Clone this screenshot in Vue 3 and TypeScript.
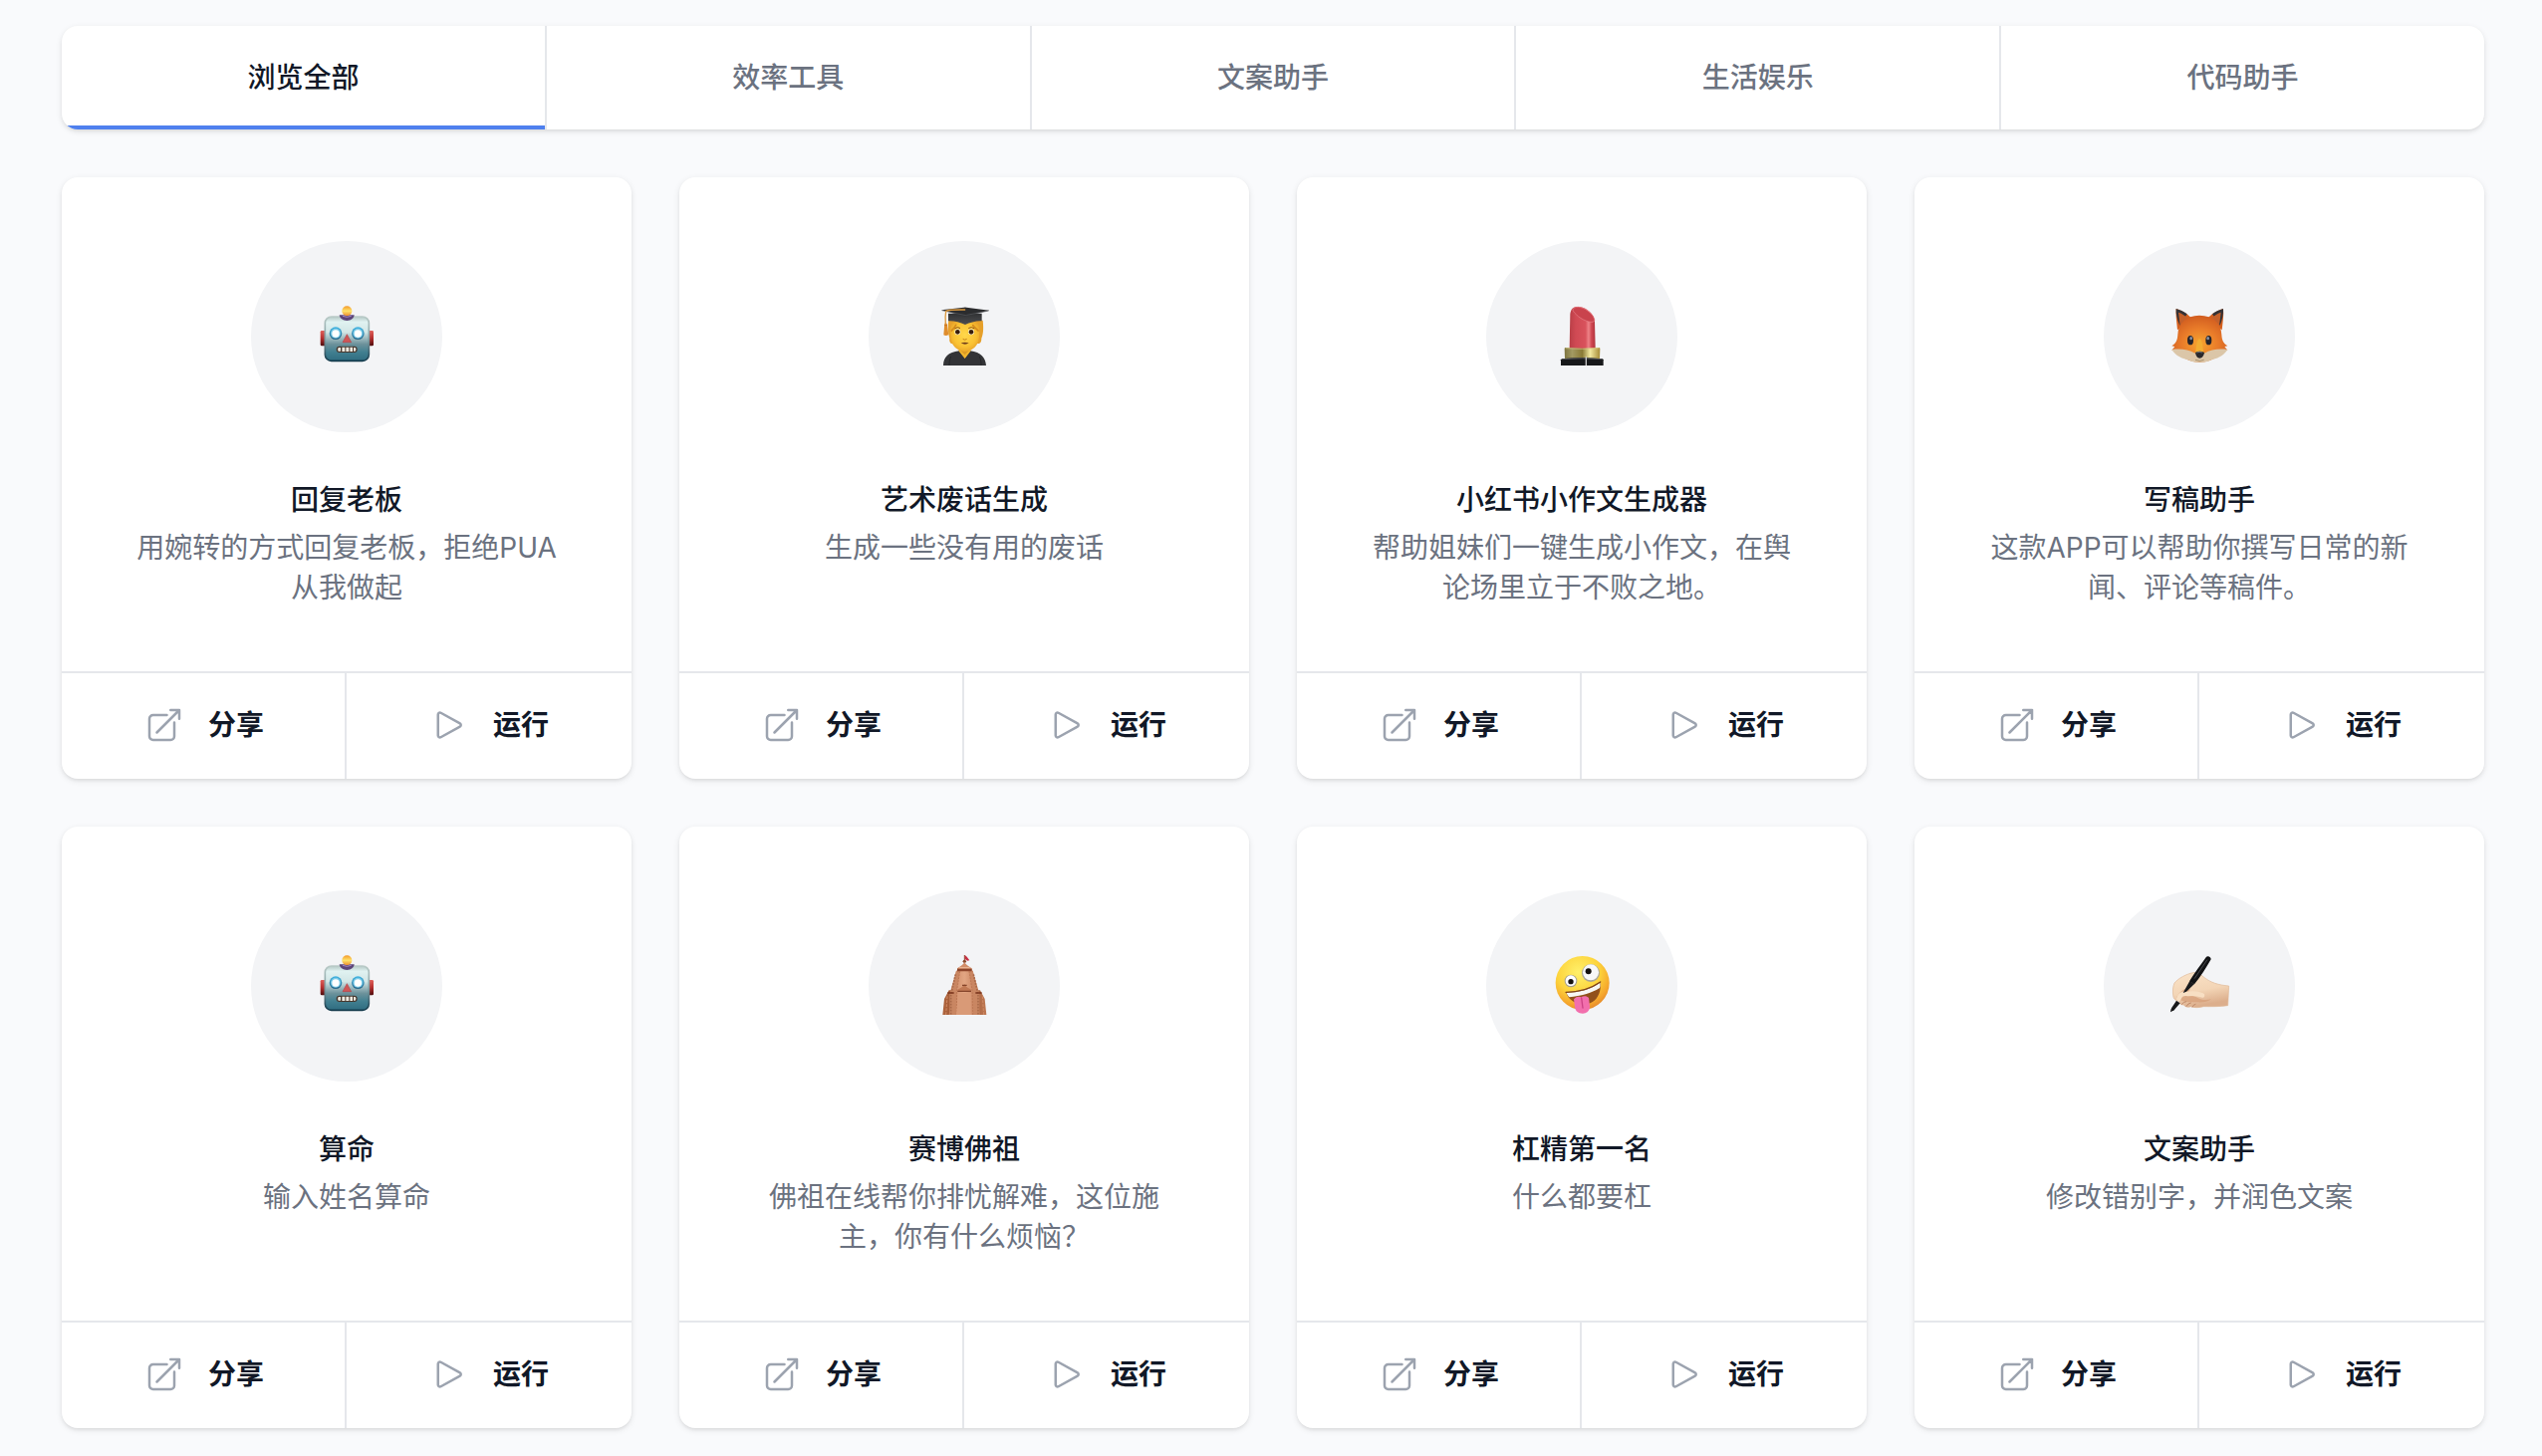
<script setup lang="ts">
import { ref } from 'vue'

type IconName = 'robot' | 'graduate' | 'lipstick' | 'fox' | 'temple' | 'zany' | 'writing'

interface Category {
  id: string
  label: string
}

interface AppCard {
  id: number
  icon: IconName
  name: string
  description: string
}

const categories: Category[] = [
  { id: 'all', label: '浏览全部' },
  { id: 'tools', label: '效率工具' },
  { id: 'writing', label: '文案助手' },
  { id: 'life', label: '生活娱乐' },
  { id: 'code', label: '代码助手' },
]

const apps: AppCard[] = [
  { id: 1, icon: 'robot', name: '回复老板', description: '用婉转的方式回复老板，拒绝PUA从我做起' },
  { id: 2, icon: 'graduate', name: '艺术废话生成', description: '生成一些没有用的废话' },
  { id: 3, icon: 'lipstick', name: '小红书小作文生成器', description: '帮助姐妹们一键生成小作文，在舆论场里立于不败之地。' },
  { id: 4, icon: 'fox', name: '写稿助手', description: '这款APP可以帮助你撰写日常的新闻、评论等稿件。' },
  { id: 5, icon: 'robot', name: '算命', description: '输入姓名算命' },
  { id: 6, icon: 'temple', name: '赛博佛祖', description: '佛祖在线帮你排忧解难，这位施主，你有什么烦恼？' },
  { id: 7, icon: 'zany', name: '杠精第一名', description: '什么都要杠' },
  { id: 8, icon: 'writing', name: '文案助手', description: '修改错别字，并润色文案' },
]

const active = ref('all')
</script>

<template>
  <main class="page">
    <!-- Gradients shared by the card pictures -->
    <svg class="defs" width="0" height="0" aria-hidden="true">
      <defs>
        <linearGradient id="g-steel" x1="0" y1="0" x2="0" y2="1">
          <stop offset="0" stop-color="#b4c8c5" />
          <stop offset="0.12" stop-color="#e0f2f1" />
          <stop offset="0.35" stop-color="#d2e6e6" />
          <stop offset="0.62" stop-color="#6d929b" />
          <stop offset="0.8" stop-color="#417f90" />
          <stop offset="1" stop-color="#2f6c80" />
        </linearGradient>
        <linearGradient id="g-steel-edge" x1="0" y1="0" x2="0" y2="1">
          <stop offset="0" stop-color="#b9cac7" />
          <stop offset="0.5" stop-color="#819ea2" />
          <stop offset="1" stop-color="#12394b" />
        </linearGradient>
        <linearGradient id="g-ear" x1="0" y1="0" x2="0" y2="1">
          <stop offset="0" stop-color="#e0605b" />
          <stop offset="0.5" stop-color="#b52f2e" />
          <stop offset="1" stop-color="#4c0b0c" />
        </linearGradient>
        <linearGradient id="g-bulb" x1="0" y1="0" x2="0" y2="1">
          <stop offset="0" stop-color="#f39a2c" />
          <stop offset="0.5" stop-color="#ffe36a" />
          <stop offset="1" stop-color="#ee8a2c" />
        </linearGradient>
        <linearGradient id="g-eye" x1="0" y1="0" x2="0" y2="1">
          <stop offset="0" stop-color="#3fb4e2" />
          <stop offset="1" stop-color="#2a6688" />
        </linearGradient>
        <radialGradient id="g-skin" cx="0.5" cy="0.45" r="0.6">
          <stop offset="0" stop-color="#ffd84b" />
          <stop offset="0.65" stop-color="#fac233" />
          <stop offset="1" stop-color="#e6a028" />
        </radialGradient>
        <linearGradient id="g-cap" x1="0" y1="0" x2="0" y2="1">
          <stop offset="0" stop-color="#303133" />
          <stop offset="1" stop-color="#4c4d50" />
        </linearGradient>
        <linearGradient id="g-lip" x1="0" y1="0" x2="1" y2="0">
          <stop offset="0" stop-color="#b93f47" />
          <stop offset="0.25" stop-color="#d04a54" />
          <stop offset="0.62" stop-color="#d9525c" />
          <stop offset="0.74" stop-color="#ee8489" />
          <stop offset="0.85" stop-color="#cf4650" />
          <stop offset="1" stop-color="#b0343d" />
        </linearGradient>
        <linearGradient id="g-gold" x1="0" y1="0" x2="1" y2="0">
          <stop offset="0" stop-color="#7d7440" />
          <stop offset="0.22" stop-color="#a39a62" />
          <stop offset="0.5" stop-color="#8a7a35" />
          <stop offset="0.72" stop-color="#f3e9a0" />
          <stop offset="1" stop-color="#a78c36" />
        </linearGradient>
        <radialGradient id="g-fox" cx="0.5" cy="0.6" r="0.62">
          <stop offset="0" stop-color="#f6a52f" />
          <stop offset="0.5" stop-color="#ea7d2a" />
          <stop offset="1" stop-color="#cf5a1f" />
        </radialGradient>
        <linearGradient id="g-temple" x1="0" y1="0" x2="1" y2="0">
          <stop offset="0" stop-color="#c98461" />
          <stop offset="0.5" stop-color="#e2a582" />
          <stop offset="1" stop-color="#bb7350" />
        </linearGradient>
        <linearGradient id="g-temple-side" x1="0" y1="0" x2="1" y2="0">
          <stop offset="0" stop-color="#b0663f" />
          <stop offset="0.5" stop-color="#8d492b" />
          <stop offset="1" stop-color="#c07a54" />
        </linearGradient>
        <radialGradient id="g-face" cx="0.42" cy="0.3" r="0.72">
          <stop offset="0" stop-color="#fff06a" />
          <stop offset="0.55" stop-color="#fdd43c" />
          <stop offset="0.85" stop-color="#f5a62c" />
          <stop offset="1" stop-color="#e58a2c" />
        </radialGradient>
        <linearGradient id="g-hand" x1="0" y1="0" x2="0.3" y2="1">
          <stop offset="0" stop-color="#fae3c8" />
          <stop offset="0.6" stop-color="#f3d5b6" />
          <stop offset="1" stop-color="#dcae8c" />
        </linearGradient>
      </defs>
    </svg>

    <nav class="tabs" aria-label="分类">
      <a
        v-for="c in categories"
        :key="c.id"
        :href="'#' + c.id"
        class="tab"
        :class="{ 'tab--active': active === c.id }"
        :aria-current="active === c.id ? 'page' : undefined"
        @click.prevent="active = c.id"
      >{{ c.label }}</a>
    </nav>

    <ul class="grid">
      <li v-for="app in apps" :key="app.id" class="card">
        <div class="card__body">
          <div class="avatar">
            <svg v-if="app.icon === 'robot'" class="emoji" viewBox="48 48 192 192" aria-hidden="true">
              <rect x="65" y="126" width="17" height="46" rx="4" fill="url(#g-ear)" />
              <rect x="208" y="126" width="17" height="46" rx="4" fill="url(#g-ear)" />
              <rect x="79" y="84" width="132" height="133" rx="19" fill="url(#g-steel)" stroke="url(#g-steel-edge)" stroke-width="5" />
              <path d="M122 79h45c-1 10-10 17-22 17s-22-7-23-17z" fill="#5d4579" />
              <path d="M132 82q13 6 26 0" fill="none" stroke="#a58ac0" stroke-width="3" />
              <circle cx="145" cy="67" r="15" fill="url(#g-bulb)" />
              <circle cx="111" cy="134" r="19" fill="url(#g-eye)" />
              <circle cx="178" cy="134" r="19" fill="url(#g-eye)" />
              <circle cx="111" cy="134" r="15" fill="#7ccbe8" />
              <circle cx="178" cy="134" r="15" fill="#7ccbe8" />
              <circle cx="111" cy="135" r="11" fill="#fff" />
              <circle cx="178" cy="135" r="11" fill="#fff" />
              <path d="M145 137l13 24h-26z" fill="#cf5656" stroke="#b2444a" stroke-width="2" stroke-linejoin="round" />
              <rect x="113" y="173" width="63" height="19" rx="9" fill="#47382f" />
              <path d="M119 177h7v11h-7q-4-5 0-11zM130 176h9v13h-9zM142 176h9v13h-9zM154 176h8v13h-8zM165 177h5q5 5 0 11h-5z" fill="#eeeae0" />
            </svg>

            <svg v-else-if="app.icon === 'graduate'" class="emoji" viewBox="48 48 192 192" aria-hidden="true">
              <path d="M97 95h103c2 18 3 38-4 54 0 9-2 13-7 16h-84c-5-4-6-9-5-16-5-16-6-36-3-54z" fill="#e6a02a" />
              <path d="M128 170h35v28l-17 12-18-12z" fill="#dc9a25" />
              <path d="M81 231c1-26 14-39 48-44l17 22 16-22c33 5 46 20 48 44z" fill="#333437" />
              <path d="M127 187l19 23 18-23-5-2-13 14-14-14z" fill="#f1b52e" />
              <path d="M104 204c-4 8-5 17-5 27M190 204c4 8 5 17 5 27" fill="none" stroke="#1d1e20" stroke-width="2" />
              <path d="M106 102c15-6 66-6 80 0 5 20 5 42 0 58-6 18-24 29-40 29s-34-11-40-29c-5-16-5-38 0-58z" fill="url(#g-skin)" />
              <path d="M106 126c4-5 9-9 13-17M186 126c-5-5-10-9-16-16" fill="none" stroke="#d58a1c" stroke-width="5" stroke-linecap="round" />
              <path d="M116 119q8-6 15-1M158 118q8-5 16 1" fill="none" stroke="#8d5516" stroke-width="3" stroke-linecap="round" />
              <circle cx="124" cy="130" r="9" fill="#fff5d0" />
              <circle cx="165" cy="130" r="9" fill="#fff5d0" />
              <circle cx="124" cy="130" r="7" fill="#3a1d0a" />
              <circle cx="165" cy="130" r="7" fill="#3a1d0a" />
              <path d="M141 152q5 4 10 0" fill="none" stroke="#c3811b" stroke-width="3" stroke-linecap="round" />
              <path d="M134 163q12-3 24 0-11 8-24 0z" fill="#71401d" />
              <path d="M96 74h101v23c-18-1-36 5-50 11-16-7-33-12-51-11z" fill="url(#g-cap)" />
              <path d="M75 64l68-8q4-1 8 0l69 9-69 16q-4 1-9 0z" fill="#2b2c2e" />
              <path d="M77 65l67 14q4 1 8 0l66-13" fill="none" stroke="#5b5c60" stroke-width="2" />
              <path d="M146 63c-25 0-45-1-57 4-2 11-2 25-1 38" fill="none" stroke="#dc9a40" stroke-width="4" stroke-linecap="round" />
              <path d="M85 104h7l5 34q-7 5-15 1z" fill="#df8d2d" />
              <path d="M84 110h9" stroke="#b5671f" stroke-width="2" />
            </svg>

            <svg v-else-if="app.icon === 'lipstick'" class="emoji" viewBox="48 48 192 192" aria-hidden="true">
              <path d="M107 180l2-104c2-17 11-24 26-22 25 2 46 21 48 45l2 81z" fill="url(#g-lip)" />
              <path d="M117 61c11-12 34-5 51 10 12 11 17 23 13 27-8 7-39-5-53-20-8-7-12-13-11-17z" fill="#c9434d" stroke="#e8828a" stroke-width="2" />
              <path d="M95 177q50 5 101 0 3 0 3 4l-1 30H93l-1-30q0-4 3-4z" fill="url(#g-gold)" />
              <path d="M95 179q50 4 101 0" fill="none" stroke="#d8cd88" stroke-width="2" />
              <path d="M84 211q60-6 123 0l2 3v17H81v-17z" fill="#17181a" />
              <path d="M84 212q60-5 123 0" fill="none" stroke="#55565a" stroke-width="3" />
              <path d="M157 205v26" stroke="#c8c8c8" stroke-width="4" />
            </svg>

            <svg v-else-if="app.icon === 'fox'" class="emoji" viewBox="48 48 192 192" aria-hidden="true">
              <path d="M78 124C76 98 72 78 74 60c19 6 38 17 49 32zM212 124c3-26 6-46 4-64-20 6-38 17-49 32z" fill="#d55f1d" />
              <path d="M74 60c11 3 23 8 33 16l-22 34C78 93 73 76 74 60zM216 60c-11 3-23 8-33 16l23 34c7-17 11-34 10-50z" fill="#343236" />
              <path d="M81 71c13 4 26 14 32 21l-26 28zM209 71c-13 4-26 14-32 21l26 28z" fill="#c4602a" />
              <path d="M144 80c43 0 66 25 67 58 1 17 5 26 18 34l-9 2 9 11-12 1c-12 19-40 34-72 36-32-2-60-17-72-36l-12-1 9-11-9-2c13-8 17-17 18-34 1-33 24-58 65-58z" fill="url(#g-fox)" />
              <path d="M61 183c25-3 50-1 70 11 8-5 20-5 28 0 20-12 45-14 70-11-12 20-33 28-53 32-9 8-53 8-62 0-20-4-41-12-53-32z" fill="#dbc6a8" />
              <path d="M132 192c4-24 5-40 13-41 7 1 8 17 12 41z" fill="#f3ad32" />
              <ellipse cx="117" cy="155" rx="9" ry="14" fill="#25242b" />
              <ellipse cx="172" cy="155" rx="9" ry="14" fill="#25242b" />
              <ellipse cx="119" cy="149" rx="4" ry="5" fill="#8992a4" />
              <ellipse cx="170" cy="149" rx="4" ry="5" fill="#8992a4" />
              <path d="M132 192q13-8 27 0c-1 9-7 17-14 17s-12-8-13-17z" fill="#29282b" />
              <path d="M136 192q8-4 17 0" fill="none" stroke="#77777d" stroke-width="3" />
              <path d="M132 214q13 6 26 0" fill="none" stroke="#917552" stroke-width="2" />
            </svg>

            <svg v-else-if="app.icon === 'temple'" class="emoji" viewBox="48 54 192 192" aria-hidden="true">
              <path d="M145 57v20" stroke="#874628" stroke-width="3" />
              <path d="M146 57l6 5 8 11-6 1-8-5z" fill="#c62e43" />
              <circle cx="145" cy="76" r="5" fill="#8b4a2c" />
              <path d="M79 237l5-48 14-26h15v74zM211 237l-5-48-14-26h-15v74z" fill="url(#g-temple-side)" />
              <path d="M120 104h50l22 133h-94z" fill="url(#g-temple)" />
              <path d="M120 104L100 174v63h20l2-75 9-58zM170 104l20 70v63h-19l-3-75-9-58z" fill="#c98662" />
              <path d="M118 115l-14 62v60M172 115l14 62v60" fill="none" stroke="#a96a4a" stroke-width="5" stroke-dasharray="5 4" />
              <path d="M131 106l-9 56-1 75M159 106l9 56 2 75" fill="none" stroke="#bd7855" stroke-width="3" stroke-dasharray="6 3" />
              <path d="M145 78c3 8 12 12 22 19v8h-44v-8c10-7 19-11 22-19z" fill="#d28d68" />
              <path d="M123 98h44v8h-44z" fill="#8d452b" />
              <path d="M129 95h32" stroke="#efbc9b" stroke-width="3" />
              <path d="M145 144q3 9 20 17v7h-41v-7q17-8 21-17z" fill="#c17954" />
              <path d="M124 166h41M138 148h14" stroke="#85452b" stroke-width="4" />
              <path d="M94 171h19M178 171h19" stroke="#7a351c" stroke-width="5" />
              <path d="M93 181l-4 56M199 181l4 56" stroke="#d08a65" stroke-width="3" stroke-dasharray="8 4" />
              <path d="M126 171h38v66h-44z" fill="#d99a77" />
            </svg>

            <svg v-else-if="app.icon === 'zany'" class="emoji" viewBox="48 54 192 192" aria-hidden="true">
              <circle cx="146" cy="141" r="81" fill="url(#g-face)" />
              <circle cx="111" cy="135" r="19" fill="#a9a28b" />
              <circle cx="111" cy="134" r="16" fill="#fff" />
              <circle cx="111" cy="137" r="8" fill="#15110e" />
              <circle cx="171" cy="111" r="27" fill="#aaa699" />
              <circle cx="171" cy="109" r="24" fill="#f8f8f8" />
              <circle cx="164" cy="106" r="9" fill="#15110e" />
              <path d="M96 169c41 0 75-11 104-31 3 25-5 49-25 61-24 13-66 7-79-30z" fill="#92501b" />
              <path d="M98 170c39 0 75-11 101-30 1 6 1 12-1 16-26 16-56 24-92 28q-6-6-8-14z" fill="#f7f7f4" />
              <path d="M96 169c41 0 75-11 104-31" fill="none" stroke="#7c421a" stroke-width="4" stroke-linecap="round" />
              <path d="M120 190c7-9 17-9 22-6 7-5 17-5 23 2l3 24c2 13-9 23-21 23-13 0-22-6-24-19z" fill="#f26fad" />
              <path d="M143 186l4 30" stroke="#cc4185" stroke-width="4" stroke-linecap="round" />
            </svg>

            <svg v-else class="emoji" viewBox="48 54 192 192" aria-hidden="true">
              <path d="M66 184c-4-18-1-34 3-43 13-15 36-27 56-31 9-2 19 2 28 10 25 21 49 27 80 30l-3 59c-25 4-49 3-73 3-15 4-29 4-38 0-10 3-17 2-22-5-9 0-13-3-14-12-8 1-14-3-17-11z" fill="url(#g-hand)" stroke="#dfb897" stroke-width="2" />
              <path d="M99 160c-9 5-18 12-24 25 16 14 42 14 62 14 18 1 31-1 43-9-18 4-31 2-42-5-12-8-25-4-35-6l14-19z" fill="#d59c76" opacity="0.7" />
              <path d="M82 188c5-15 15-17 29-14 18-3 31 0 42 4" fill="none" stroke="#f8dfc3" stroke-width="14" stroke-linecap="round" />
              <path d="M91 205q6-8 13-8M105 211q5-9 13-10M123 213q2-6 9-8" fill="none" stroke="#bf896a" stroke-width="3" stroke-linecap="round" />
              <path d="M164 64c4-7 16-2 15 6-14 25-31 52-50 75l-15-9c16-26 33-48 50-72z" fill="#121315" />
              <path d="M115 135l14 9-24 23-10 4z" fill="#191a1c" />
              <path d="M75 194l11 8-18 21-11 6q0-8 4-14z" fill="#17181a" />
              <path d="M167 72l-37 55" stroke="#4a4b4f" stroke-width="3" stroke-linecap="round" />
            </svg>
          </div>
          <h3 class="card__name">{{ app.name }}</h3>
          <p class="card__desc">{{ app.description }}</p>
        </div>
        <div class="card__actions">
          <button type="button" class="action">
            <svg class="action__icon" viewBox="0 0 24 24" aria-hidden="true">
              <path d="M13.5 6H5.25A2.25 2.25 0 003 8.25v10.5A2.25 2.25 0 005.25 21h10.5A2.25 2.25 0 0018 18.75V10.5m-10.5 6L21 3m0 0h-5.25M21 3v5.25" />
            </svg>
            <span>分享</span>
          </button>
          <button type="button" class="action">
            <svg class="action__icon" viewBox="0 0 24 24" aria-hidden="true">
              <path d="M5.25 5.653c0-.856.917-1.398 1.667-.986l11.54 6.348a1.125 1.125 0 010 1.971l-11.54 6.347a1.125 1.125 0 01-1.667-.985V5.653z" />
            </svg>
            <span>运行</span>
          </button>
        </div>
      </li>
    </ul>
  </main>
</template>

<style>
body {
  margin: 0;
  background: #f9fafc;
}
</style>

<style scoped>
.page {
  box-sizing: border-box;
  padding: 26px 58px 28px 62px;
  font-family: Inter, "Noto Sans CJK SC", sans-serif;
  font-size: 28px;
  line-height: 40px;
  color: #111827;
}

.defs {
  position: absolute;
}

.tabs {
  display: flex;
  overflow: hidden;
  border-radius: 16px;
  background: #fff;
  box-shadow: 0 2px 6px rgba(0, 0, 0, 0.1), 0 2px 4px -2px rgba(0, 0, 0, 0.1);
}

.tab {
  flex: 1 1 0;
  padding: 32px 0;
  text-align: center;
  text-decoration: none;
  font-weight: 500;
  color: #6b7280;
}

.tab + .tab {
  border-left: 2px solid #e5e7eb;
}

.tab--active {
  color: #111827;
  box-shadow: inset 0 -4px 0 #4f80ee;
}

.grid {
  display: grid;
  grid-template-columns: repeat(4, minmax(0, 1fr));
  gap: 48px;
  margin: 48px 0 0;
  padding: 0;
  list-style: none;
}

.card {
  display: flex;
  flex-direction: column;
  overflow: hidden;
  border-radius: 16px;
  background: #fff;
  text-align: center;
  box-shadow: 0 2px 6px rgba(0, 0, 0, 0.1), 0 2px 4px -2px rgba(0, 0, 0, 0.1);
}

.card__body {
  display: flex;
  flex: 1;
  flex-direction: column;
  align-items: center;
  padding: 64px;
}

.avatar {
  display: flex;
  align-items: center;
  justify-content: center;
  width: 192px;
  height: 192px;
  border-radius: 50%;
  background: #f3f4f6;
}

.emoji {
  width: 64px;
  height: 64px;
}

.card__name {
  margin: 48px 0 0;
  font-size: 28px;
  font-weight: 500;
}

.card__desc {
  min-height: 80px;
  margin: 8px 0 0;
  color: #6b7280;
}

.card__actions {
  display: flex;
  border-top: 2px solid #e5e7eb;
}

.action {
  display: flex;
  flex: 1 1 0;
  align-items: center;
  justify-content: center;
  gap: 24px;
  margin: 0;
  padding: 32px 0 34px;
  border: 0;
  background: transparent;
  color: #111827;
  font: inherit;
  font-weight: 600;
  cursor: pointer;
}

.action + .action {
  margin-left: -2px;
  border-left: 2px solid #e5e7eb;
}

.action__icon {
  width: 40px;
  height: 40px;
  fill: none;
  stroke: #9ca3af;
  stroke-width: 1.5;
  stroke-linecap: round;
  stroke-linejoin: round;
}
</style>
